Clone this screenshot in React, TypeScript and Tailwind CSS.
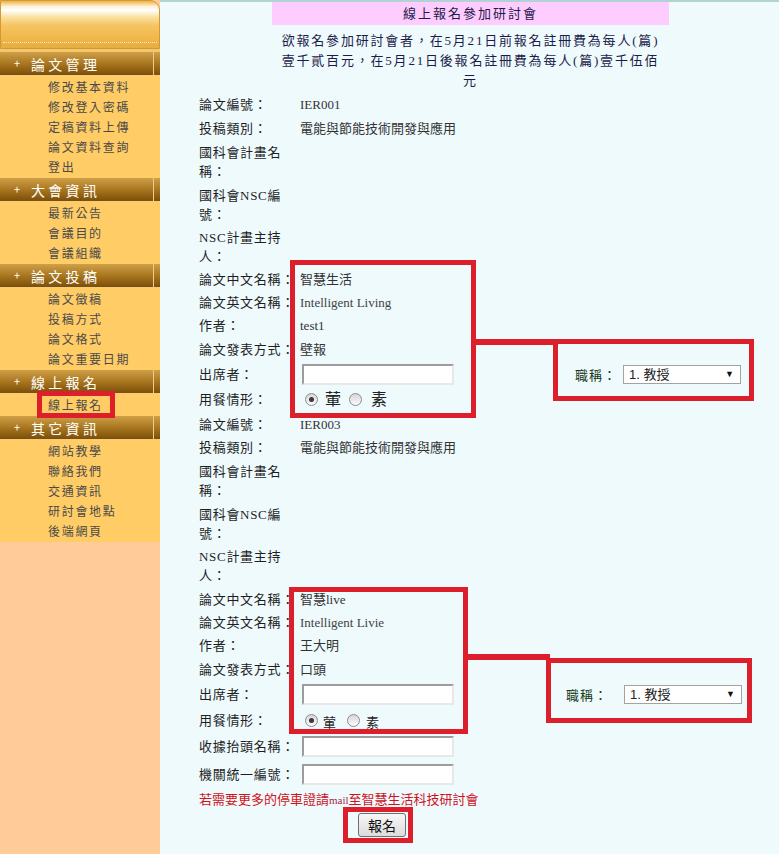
import React from "react";

const sections = [
  { title: "論文管理", items: ["修改基本資料", "修改登入密碼", "定稿資料上傳", "論文資料查詢", "登出"] },
  { title: "大會資訊", items: ["最新公告", "會議目的", "會議組織"] },
  { title: "論文投稿", items: ["論文徵稿", "投稿方式", "論文格式", "論文重要日期"] },
  { title: "線上報名", items: ["線上報名"] },
  { title: "其它資訊", items: ["網站教學", "聯絡我們", "交通資訊", "研討會地點", "後端網頁"] },
];

function Row({ h, label, children }: { h: string; label: string; children?: React.ReactNode }) {
  return (
    <div className={`flex items-center ${h}`}>
      <div className="w-[101px] shrink-0 text-[13px] leading-[19px] tracking-[0.7px] text-[#1e1e1e]">{label}</div>
      <div className="flex items-center text-[13px] leading-[19px] text-[#333]">{children}</div>
    </div>
  );
}

function Input() {
  return (
    <input
      type="text"
      className="ml-[2px] w-[152px] h-[21px] bg-white border-2 border-t-[#9c9c9c] border-l-[#9c9c9c] border-r-[#e8e8e8] border-b-[#e8e8e8] outline-none"
    />
  );
}

function Radio({ checked }: { checked?: boolean }) {
  return (
    <span className="inline-flex w-[13px] h-[13px] shrink-0 rounded-full border border-[#8c8c8c] bg-[linear-gradient(to_bottom,#d6d6d6,#fbfbfb)] items-center justify-center">
      {checked && <span className="w-[5px] h-[5px] rounded-full bg-[#3a3a3a]" />}
    </span>
  );
}

function Select() {
  return (
    <div className="w-[118px] h-[19px] bg-white border border-[#a3a3a3] flex items-center justify-between pl-[5px] pr-[6px] text-[13px] text-[#222] font-['Liberation_Sans','Noto_Sans_CJK_TC',sans-serif]">
      <span>1. 教授</span>
      <span className="text-[9px] text-[#111]">▼</span>
    </div>
  );
}

export default function App() {
  const red = "border-[5px] border-[#DC1F2A]";
  return (
    <div className="relative flex min-h-[854px] w-[779px]">
      {/* Sidebar */}
      <div className="w-[160px] shrink-0 flex flex-col bg-[#FFCC99] font-['Noto_Sans_CJK_TC',sans-serif]">
        <div className="h-[49px] rounded-tr-[10px] border border-[#D49A30] bg-[linear-gradient(to_bottom,#EDB548_0%,#FFF3DA_12%,#FFFFFF_20%,#FBE1A0_34%,#F5C462_52%,#F0B84E_78%,#E8AC3E_100%)] flex flex-col">
          <div className="flex-1" />
          <div className="mx-[2px] mb-[5px] border-b border-dotted border-[#FFEBC0]" />
        </div>
        <div className="h-[3px] bg-[#F4C66E]" />
        <div className="bg-[#FFCC66]">
          {sections.map((s) => (
            <div key={s.title}>
              <div className="flex h-[24px] border-b border-[#F2CC80]">
                <div className="w-[153px] flex items-center bg-[linear-gradient(to_bottom,#CFA048,#A9771F_50%,#7C4F08)] text-white">
                  <span className="ml-[14px] w-[17px] text-[11px] leading-none">+</span>
                  <span className="text-[14px] tracking-[3.3px] leading-none">{s.title}</span>
                </div>
                <div className="w-px bg-[#EDCB8C]" />
                <div className="flex-1 bg-[linear-gradient(to_bottom,#CFA048,#A9771F_50%,#7C4F08)]" />
              </div>
              <div className="pt-px pb-px">
                {s.items.map((it) => (
                  <div key={it} className="h-[20px] flex items-center pl-[48px] text-[12px] tracking-[1.7px] text-[#4a4a4a]">
                    {it}
                  </div>
                ))}
              </div>
            </div>
          ))}
        </div>
        <div className="flex-1" />
      </div>

      {/* Main */}
      <div className="flex-1 bg-[#EFFAFD] border-t-2 border-[#B3D2D4] font-['Liberation_Serif','Noto_Sans_CJK_TC',serif]">
        <div className="ml-[112px] w-[397px]">
          <div className="h-[23px] bg-[#FFCCFF] flex items-center justify-center text-[13px] tracking-[2px] text-[#1c1c4a]">
            線上報名參加研討會
          </div>
          <div className="mt-[6px] text-center text-[13px] leading-[20px] tracking-[1.8px] text-[#1c1c4a] whitespace-nowrap">
            欲報名參加研討會者，在5月21日前報名註冊費為每人(篇)
            <br />
            壹千貳百元，在5月21日後報名註冊費為每人(篇)壹千伍佰
            <br />
            元
          </div>
        </div>

        <div className="pl-[39px] mt-px">
          <Row h="h-[24px]" label="論文編號：">IER001</Row>
          <Row h="h-[24px]" label="投稿類別：">電能與節能技術開發與應用</Row>
          <Row h="h-[43px]" label="國科會計畫名稱：" />
          <Row h="h-[43px]" label="國科會NSC編號：" />
          <Row h="h-[42px]" label="NSC計畫主持人：" />
          <Row h="h-[23px]" label="論文中文名稱：">智慧生活</Row>
          <Row h="h-[22px]" label="論文英文名稱："><span className="text-[#444]">Intelligent Living</span></Row>
          <Row h="h-[24px]" label="作者：">test1</Row>
          <Row h="h-[24px]" label="論文發表方式：">壁報</Row>
          <Row h="h-[26px]" label="出席者：">
            <Input />
            <span className="ml-[121px] w-[48px] shrink-0 text-[13px] tracking-[1px] text-[#163816] font-['Noto_Sans_CJK_TC',sans-serif]">職稱：</span>
            <Select />
          </Row>
          <Row h="h-[25px]" label="用餐情形：">
            <span className="ml-[5px] flex items-center">
              <Radio checked />
              <span className="ml-[7px] text-[16px] text-[#222]">葷</span>
              <span className="ml-[8px] flex"><Radio /></span>
              <span className="ml-[9px] text-[16px] text-[#222]">素</span>
            </span>
          </Row>

          <Row h="h-[24px]" label="論文編號：">IER003</Row>
          <Row h="h-[23px]" label="投稿類別：">電能與節能技術開發與應用</Row>
          <Row h="h-[43px]" label="國科會計畫名稱：" />
          <Row h="h-[43px]" label="國科會NSC編號：" />
          <Row h="h-[42px]" label="NSC計畫主持人：" />
          <Row h="h-[24px]" label="論文中文名稱：">智慧live</Row>
          <Row h="h-[23px]" label="論文英文名稱："><span className="text-[#444]">Intelligent Livie</span></Row>
          <Row h="h-[23px]" label="作者：">王大明</Row>
          <Row h="h-[24px]" label="論文發表方式：">口頭</Row>
          <Row h="h-[26px]" label="出席者：">
            <Input />
            <span className="ml-[112px] w-[58px] shrink-0 text-[13px] tracking-[1px] text-[#163816] font-['Noto_Sans_CJK_TC',sans-serif]">職稱：</span>
            <Select />
          </Row>
          <Row h="h-[26px]" label="用餐情形：">
            <span className="ml-[5px] flex items-center">
              <Radio checked />
              <span className="ml-[5px] mt-[4px] text-[13px] text-[#222]">葷</span>
              <span className="ml-[11px] flex"><Radio /></span>
              <span className="ml-[6px] mt-[4px] text-[13px] text-[#222]">素</span>
            </span>
          </Row>
          <Row h="h-[27px]" label="收據抬頭名稱："><Input /></Row>
          <Row h="h-[28px]" label="機關統一編號："><Input /></Row>
          <div className="h-[24px] flex items-center text-[13px] text-[#D0121C] whitespace-nowrap">
            若需要更多的停車證請<span className="text-[11px] text-[#B0204A]">mail</span>至智慧生活科技研討會
          </div>
          <div className="mt-px">
            <button className="ml-[159px] w-[48px] h-[24px] border border-[#707070] rounded-[3px] bg-[linear-gradient(to_bottom,#f7f7f7,#dcdcdc)] text-[14px] text-[#111] font-['Noto_Sans_CJK_TC',sans-serif]">
              報名
            </button>
          </div>
        </div>
      </div>

      {/* Red annotation overlays */}
      <div className={`absolute left-[290px] top-[260px] w-[186px] h-[158px] ${red} pointer-events-none`} />
      <div className="absolute left-[476px] top-[339px] w-[78px] h-[6px] bg-[#DC1F2A] pointer-events-none" />
      <div className={`absolute left-[553px] top-[339px] w-[201px] h-[62px] ${red} pointer-events-none`} />
      <div className={`absolute left-[289px] top-[587px] w-[179px] h-[147px] ${red} pointer-events-none`} />
      <div className="absolute left-[468px] top-[654px] w-[82px] h-[6px] bg-[#DC1F2A] pointer-events-none" />
      <div className={`absolute left-[546px] top-[658px] w-[206px] h-[65px] ${red} pointer-events-none`} />
      <div className={`absolute left-[37px] top-[391px] w-[78px] h-[27px] ${red} pointer-events-none`} />
      <div className={`absolute left-[343px] top-[807px] w-[70px] h-[36px] ${red} pointer-events-none`} />
    </div>
  );
}
